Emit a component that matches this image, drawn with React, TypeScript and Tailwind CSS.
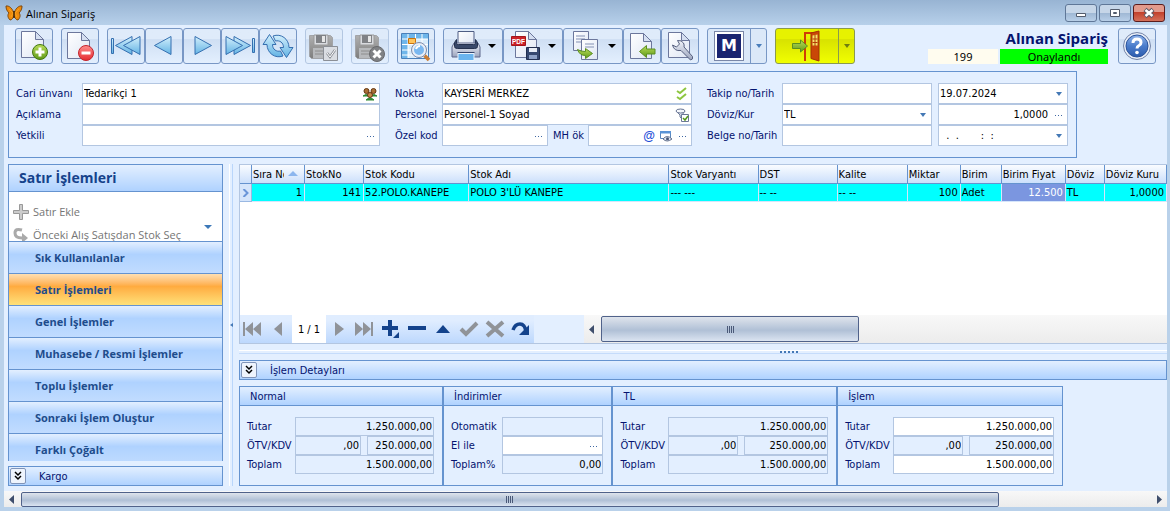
import React from 'react';

const SIDE_ITEMS = [
  'Sık Kullanılanlar',
  'Satır İşlemleri',
  'Genel İşlemler',
  'Muhasebe / Resmi İşlemler',
  'Toplu İşlemler',
  'Sonraki İşlem Oluştur',
  'Farklı Çoğalt',
];

const COLUMNS = [
  { title: 'Sıra No', value: '1', width: 'w-[53px]', right: true, sorted: true },
  { title: 'StokNo', value: '141', width: 'w-[59px]', right: true },
  { title: 'Stok Kodu', value: '52.POLO.KANEPE', width: 'w-[105px]' },
  { title: 'Stok Adı', value: "POLO 3'LÜ KANEPE", width: 'w-[200px]' },
  { title: 'Stok Varyantı', value: '--- ---', width: 'w-[89px]' },
  { title: 'DST', value: '-- --', width: 'w-[79px]' },
  { title: 'Kalite', value: '-- --', width: 'w-[70px]' },
  { title: 'Miktar', value: '100', width: 'w-[53px]', right: true },
  { title: 'Birim', value: 'Adet', width: 'w-[41px]' },
  { title: 'Birim Fiyat', value: '12.500', width: 'w-[64px]', right: true, focused: true },
  { title: 'Döviz', value: 'TL', width: 'w-[39px]' },
  { title: 'Döviz Kuru', value: '1,0000', width: 'w-[62px]', right: true },
];

type IconProps = { children: React.ReactNode; size?: number };

const Icon: React.FC<IconProps> = ({ children, size = 32 }) => (
  <svg width={size} height={size} viewBox={`0 0 ${size} ${size}`} fill="none" className="shrink-0" aria-hidden="true">
    {children}
  </svg>
);

const Defs = () => (
  <svg width="0" height="0" className="absolute" aria-hidden="true">
    <defs>
      <linearGradient id="page" x1="0" y1="0" x2="1" y2="1">
        <stop offset="0" stopColor="#ffffff" />
        <stop offset="1" stopColor="#dfe6f4" />
      </linearGradient>
      <linearGradient id="arrow" x1="0" y1="0" x2="0" y2="1">
        <stop offset="0" stopColor="#d3effc" />
        <stop offset="1" stopColor="#62b3e4" />
      </linearGradient>
      <linearGradient id="green" x1="0" y1="0" x2="0" y2="1">
        <stop offset="0" stopColor="#b9dc5a" />
        <stop offset="1" stopColor="#5f9a18" />
      </linearGradient>
      <linearGradient id="red" x1="0" y1="0" x2="0" y2="1">
        <stop offset="0" stopColor="#ff8d8d" />
        <stop offset="1" stopColor="#e52a2f" />
      </linearGradient>
      <linearGradient id="steel" x1="0" y1="0" x2="0" y2="1">
        <stop offset="0" stopColor="#f2f4fa" />
        <stop offset="1" stopColor="#9aa3bd" />
      </linearGradient>
      <linearGradient id="grey" x1="0" y1="0" x2="0" y2="1">
        <stop offset="0" stopColor="#b0b0b0" />
        <stop offset="1" stopColor="#7d7d7d" />
      </linearGradient>
      <linearGradient id="help" x1="0" y1="0" x2="0" y2="1">
        <stop offset="0" stopColor="#8fb3ea" />
        <stop offset="0.5" stopColor="#4a7ccb" />
        <stop offset="1" stopColor="#2d5cae" />
      </linearGradient>
    </defs>
  </svg>
);

const Sheet: React.FC<{ x?: number; y?: number; w?: number; h?: number }> = ({ x = 4, y = 2, w = 22, h = 26 }) => (
  <>
    <path d={`M${x} ${y}h${w - 8}l8 8v${h - 8}h${-w}z`} fill="url(#page)" stroke="#6c779c" />
    <path d={`M${x + w - 8} ${y}v8h8z`} fill="#d5dff1" stroke="#6c779c" />
  </>
);

const GreenArrow: React.FC<{ d: string }> = ({ d }) => (
  <path d={d} fill="url(#green)" stroke="#5c8f21" strokeLinejoin="round" />
);

const Disk = () => (
  <>
    <path d="M1.500 5.500h21l2 2v21H3.500l-2-2z" fill="url(#grey)" stroke="#a2a4a8" />
    <path d="M6 5h14v10H6z" fill="#d9dbdf" stroke="#999" />
    <path d="M8 5h10v8H8z" fill="#808286" />
    <path d="M14 6h3v6h-3z" fill="#e7e7e7" />
    <path d="M5 18h16v10H5z" fill="#b7b9bc" />
    <path d="M7 21h10M7 24h8" stroke="#8e8e8e" />
  </>
);

const Butterfly = () => (
  <Icon size={18}>
    <path d="M8.500 8C7 4 4 1.500 1 2c0 3 1 5 3 7-2 2-1 5 1 7 2 0 3-2 4-4 1 2 2 4 4 4 2-2 3-5 1-7 2-2 3-4 3-7-3-.5-6 2-7.500 6z" fill="#ee8a0b" stroke="#7d470b" />
    <path d="M4 5l4 4-2 4M14 5l-4 4 2 4" stroke="#f7a11f" />
    <path d="M9 7v7" stroke="#3a240d" strokeWidth="1.500" />
  </Icon>
);

type ToolProps = { label: string; disabled?: boolean; joined?: boolean; children: React.ReactNode };

const ToolButton: React.FC<ToolProps> = ({ label, disabled, joined, children }) => (
  <button
    type="button"
    aria-label={label}
    disabled={disabled}
    className={`flex h-9 w-[38px] shrink-0 items-center justify-center rounded-[3px] border bg-linear-to-b from-[#dfebfa] from-30% via-[#cfdff3] via-31% to-[#e3effe] ${
      disabled ? 'border-[#b3c7e2]' : 'border-[#7897c5]'
    } ${joined ? '' : 'ml-2'}`}
  >
    {children}
  </button>
);

const ToolMenuButton: React.FC<ToolProps> = ({ label, joined, children }) => (
  <button
    type="button"
    aria-label={label}
    className={`flex h-9 w-[60px] shrink-0 items-center gap-1.5 rounded-[3px] border border-[#7897c5] bg-linear-to-b from-[#dfebfa] from-30% via-[#cfdff3] via-31% to-[#e3effe] pl-1.5 ${
      joined ? '' : 'ml-2'
    }`}
  >
    {children}
    <Icon size={8}>
      <path d="M0 2h8L4 6z" fill="#000" />
    </Icon>
  </button>
);

const Toolbar = () => (
  <div className="flex h-[46px] shrink-0 items-start pl-[3px] pr-[11px] pt-[3px]">
    <ToolButton label="Yeni">
      <Icon>
        <Sheet x={3.5} y={1.5} />
        <circle cx="22" cy="22" r="7.500" fill="url(#green)" stroke="#44790f" />
        <path d="M22 17.500v9M17.500 22h9" stroke="#fff" strokeWidth="3" />
      </Icon>
    </ToolButton>
    <ToolButton label="Sil">
      <Icon>
        <Sheet x={3.5} y={2.5} />
        <circle cx="22" cy="23" r="7.500" fill="url(#red)" stroke="#c4242c" />
        <path d="M17.500 23h9" stroke="#fff" strokeWidth="3" />
      </Icon>
    </ToolButton>
    <ToolButton label="İlk kayıt">
      <Icon>
        <g fill="url(#arrow)" stroke="#356fb0" strokeLinejoin="round">
          <path d="M1.500 8.500h2v15h-2z" />
          <path d="M22 6.500v18L5.500 15.500z" />
          <path d="M30 6.500v18L13.500 15.500z" />
        </g>
      </Icon>
    </ToolButton>
    <ToolButton label="Önceki kayıt" joined>
      <Icon>
        <path d="M23 6.500v18L6.500 15.500z" fill="url(#arrow)" stroke="#356fb0" strokeLinejoin="round" />
      </Icon>
    </ToolButton>
    <ToolButton label="Sonraki kayıt" joined>
      <Icon>
        <path d="M9 6.500v18l16.500-9z" fill="url(#arrow)" stroke="#356fb0" strokeLinejoin="round" />
      </Icon>
    </ToolButton>
    <ToolButton label="Son kayıt" joined>
      <Icon>
        <g fill="url(#arrow)" stroke="#356fb0" strokeLinejoin="round">
          <path d="M28.500 8.500h2v14h-2z" />
          <path d="M10 6.500v18l16.500-9z" />
          <path d="M2 6.500v18l16.500-9z" />
        </g>
      </Icon>
    </ToolButton>
    <ToolButton label="Yenile" joined>
      <Icon>
        <g fill="url(#arrow)" stroke="#356fb0" strokeLinejoin="round">
          <path d="M7.500 4.500l6.500 10h-3.500c0 5 4 7.500 8 6.500l2.500 5C13 29 5 23 5 14.500H1z" />
          <path d="M24.500 27.500l-6.500-10h3.500c0-5-4-7.500-8-6.500L11 6c8-3 16 3 16 11.500h4z" />
        </g>
      </Icon>
    </ToolButton>
    <ToolButton label="Kaydet" disabled>
      <Icon>
        <Disk />
        <path d="M15.500 16.500h14v14h-14z" fill="#dadde2" stroke="#8b8f96" />
        <path d="M19 23l3 4 5-7" stroke="#8b8f96" strokeWidth="2.500" />
        <path d="M19 23l3 4 5-7" stroke="#fff" />
      </Icon>
    </ToolButton>
    <ToolButton label="Vazgeç" disabled>
      <Icon>
        <Disk />
        <circle cx="23" cy="24" r="7.500" fill="#808285" stroke="#68696c" />
        <path d="M19.500 20.500l7 7M26.500 20.500l-7 7" stroke="#fff" strokeWidth="3" />
      </Icon>
    </ToolButton>
    <ToolButton label="Listele">
      <Icon>
        <path d="M1.500 3.500h27v25h-27z" fill="#d9ecfb" stroke="#4a7fb9" />
        <path d="M2 4h6v24H2zM2 4h26v5H2z" fill="#6fb6ea" />
        <path d="M2 9h26M2 14.500h26M2 20h26M2 25h26M8 4v24M15.500 4v24M22 4v24" stroke="#fff" />
        <path d="M8.500 8.500h7v5h-7z" fill="#ffc45b" stroke="#c8720d" />
        <path d="M24 25l5 5" stroke="#c97d35" strokeWidth="3.500" />
        <circle cx="19" cy="20" r="6.500" fill="#7ab8f0" stroke="#e8eef7" strokeWidth="3" />
        <circle cx="19" cy="20" r="7.500" stroke="#7d8cab" />
        <path d="M16 19q1-3 4-3" stroke="#fff" strokeWidth="2" />
      </Icon>
    </ToolButton>
    <ToolMenuButton label="Yazdır">
      <Icon>
        <path d="M8 1.500h16v14H8z" fill="url(#page)" stroke="#4e5d84" />
        <path d="M4 13h24l2 4v10H2V17z" fill="url(#steel)" stroke="#5c678a" />
        <path d="M6.500 9.500v4q0 1 2 1h15q2 0 2-1v-4l2 3v4q0 2-3 2h-17q-3 0-3-2v-4z" fill="#394869" stroke="#26324f" />
        <path d="M8 23.500h16v7H8z" fill="#6ab4ee" stroke="#eaf4fd" />
        <path d="M7.500 22.500h17" stroke="#35456c" />
      </Icon>
    </ToolMenuButton>
    <ToolMenuButton label="PDF olarak kaydet" joined>
      <Icon>
        <Sheet x={5.5} y={1.5} w={21} h={26} />
        <path d="M1.500 6.500h14v9h-14z" fill="#cc2229" stroke="#a3161c" />
        <text x="2" y="13.500" fontSize="6.500" fontWeight="bold" fontFamily="Liberation Sans, sans-serif" fill="#fff">PDF</text>
        <path d="M16.500 17.500h13v12h-13z" fill="#36486f" stroke="#222f50" />
        <path d="M19 18h8v4h-8z" fill="#e8edf6" />
        <path d="M19 25h8v4h-8z" fill="#8fa2c7" />
      </Icon>
    </ToolMenuButton>
    <ToolMenuButton label="Kopyala" joined>
      <Icon>
        <path d="M3.500 1.500h15v19h-15z" fill="url(#page)" stroke="#6c779c" />
        <path d="M6 6h9M6 9h9M6 12h7" stroke="#8391b4" />
        <path d="M11.500 9.500h16v20h-16z" fill="url(#page)" stroke="#6c779c" />
        <path d="M15 14h9M15 17h9" stroke="#8391b4" />
        <GreenArrow d="M7.500 19.500q3 2 8 2v-3l7 5-7 5v-3q-6 0-8-6z" />
      </Icon>
    </ToolMenuButton>
    <ToolButton label="İçeri al" joined>
      <Icon>
        <Sheet x={4.5} y={3.5} w={21} h={25} />
        <GreenArrow d="M13.500 21.500l7-6v3.500h8.500v5h-8.500v3.500z" />
      </Icon>
    </ToolButton>
    <ToolButton label="Ayarlar" joined>
      <Icon>
        <Sheet x={4.5} y={2.5} w={21} h={25} />
        <path d="M8.500 15l4 2 3-3-2-3.500q4-.5 6 2.500 1 2 .5 4l8.500 9.500q1 3-2 3.500L17 20.500q-7 1-8.500-5.500z" fill="url(#steel)" stroke="#56607f" strokeLinejoin="round" />
      </Icon>
    </ToolButton>
    <div className="ml-2 flex h-9 w-[60px] shrink-0 overflow-hidden rounded-[3px] border border-[#7897c5] bg-[#dbe8f8]">
      <button type="button" aria-label="M modülü" className="flex w-[42px] items-center justify-center">
        <span className="flex h-[30px] w-[30px] items-center justify-center border border-[#7a87a8] bg-white p-0.5">
          <span className="flex h-full w-full items-center justify-center bg-[#1a2470] font-['DejaVu_Sans'] text-base font-bold text-white">M</span>
        </span>
      </button>
      <button type="button" aria-label="M menüsü" className="flex flex-1 items-center justify-center border-l border-[#7897c5]">
        <Icon size={6}>
          <path d="M0 1h6L3 5z" fill="#4a7ebb" />
        </Icon>
      </button>
    </div>
    <div className="ml-2 flex h-9 w-20 shrink-0 overflow-hidden rounded-[3px] border border-[#8a9a4d] bg-linear-to-b from-[#e7f200] from-30% via-[#d8e200] via-31% to-[#f1ff00]">
      <button type="button" aria-label="Çıkış" className="flex w-[62px] items-center justify-center">
        <Icon>
          <path d="M14 31V3h12" stroke="#cf3d05" strokeWidth="2" />
          <path d="M20 3l8-2v30l-8-2.500z" fill="#c94707" stroke="#a33206" />
          <path d="M21.500 5.500l5-1v11h-5z" fill="#f4e36b" />
          <path d="M24 5v11M21.500 9h5M21.500 12.500h5" stroke="#b33c07" />
          <GreenArrow d="M1.500 13.500h8V10l7 6-7 6v-3.500h-8z" />
        </Icon>
      </button>
      <button type="button" aria-label="Çıkış menüsü" className="flex flex-1 items-center justify-center border-l border-[#8a9a4d]">
        <Icon size={6}>
          <path d="M0 1h6L3 5z" fill="#6f7d10" />
        </Icon>
      </button>
    </div>
    <div className="ml-auto mr-2.5 w-[180px]">
      <h1 className="h-[21px] text-right font-['Open_Sans'] text-[15px] font-bold leading-[21px] text-[#04136f]">Alınan Sipariş</h1>
      <div className="flex gap-0.5 text-center font-['Noto_Sans'] leading-[15px] text-black">
        <span className="h-[15px] w-[70px] bg-[#fffcef]">199</span>
        <span className="h-[15px] flex-1 bg-[#00ff00]">Onaylandı</span>
      </div>
    </div>
    <ToolButton label="Yardım" joined>
      <Icon>
        <circle cx="16" cy="16" r="13.500" fill="#e9eef7" stroke="#7384a8" />
        <circle cx="16" cy="16" r="11" fill="url(#help)" stroke="#2c549c" />
        <path d="M12 13q0-4 4-4t4 3.500q0 2-2 3t-2 3" stroke="#fff" strokeWidth="3" />
        <circle cx="16" cy="22.500" r="1.800" fill="#fff" />
      </Icon>
    </ToolButton>
  </div>
);

const Dots = () => (
  <Icon size={12}>
    <path d="M2 6.500h1M5 6.500h1M8 6.500h1" stroke="#3f68a3" />
  </Icon>
);

const Chevron = () => (
  <Icon size={12}>
    <path d="M3 4h6L6 8z" fill="#4478b5" />
  </Icon>
);

type FieldProps = {
  id: string;
  label: string;
  value?: string;
  hideLabel?: boolean;
  right?: boolean;
  readOnly?: boolean;
  tail?: React.ReactNode;
  labelWidth?: string;
};

const Field: React.FC<FieldProps> = ({ id, label, value = '', hideLabel, right, readOnly, tail, labelWidth = 'w-[66px]' }) => (
  <div className="flex min-w-0 flex-1">
    {!hideLabel && (
      <label htmlFor={id} className={`flex shrink-0 items-center whitespace-nowrap ${labelWidth}`}>
        {label}
      </label>
    )}
    <div className={`flex min-w-0 flex-1 items-center border border-[#b3c6e1] ${readOnly ? '' : 'bg-white'}`}>
      <input
        id={id}
        aria-label={hideLabel ? label : undefined}
        defaultValue={value}
        readOnly={readOnly}
        className={`h-full min-w-0 flex-1 bg-transparent px-px text-black outline-none ${right ? 'text-right' : ''}`}
      />
      {tail && (
        <button type="button" aria-label={`${label} seç`} className="flex shrink-0 items-center gap-1 pr-0.5">
          {tail}
        </button>
      )}
    </div>
  </div>
);

const OrderForm = () => (
  <form className="ml-1 flex h-[87px] w-full max-w-[1069px] shrink-0 items-center gap-[15px] border border-[#6593cf] pl-[7px] pr-2">
    <div className="grid min-w-0 flex-[364] grid-cols-1 grid-rows-[21px_21px_21px]">
      <Field
        id="cari"
        label="Cari ünvanı"
        value="Tedarikçi 1"
        tail={
          <Icon size={14}>
            <path d="M0 9q3-3 6 0zM8 9q3-3 6 0zM3 13q4-4 8 0z" fill="#2f8a35" stroke="#2f8a35" />
            <circle cx="3.500" cy="4" r="2.500" fill="#a86f35" stroke="#643610" />
            <circle cx="10.500" cy="4" r="2.500" fill="#a86f35" stroke="#643610" />
            <circle cx="7" cy="8" r="2.500" fill="#c58a4b" stroke="#643610" />
          </Icon>
        }
      />
      <Field id="aciklama" label="Açıklama" />
      <Field id="yetkili" label="Yetkili" tail={<Dots />} />
    </div>
    <div className="grid min-w-0 flex-[297] grid-cols-1 grid-rows-[21px_21px_21px]">
      <Field
        id="nokta"
        label="Nokta"
        value="KAYSERİ MERKEZ"
        labelWidth="w-[47px]"
        tail={
          <Icon size={14}>
            <path d="M2 4l3 2 6-5M2 10l3 2 6-5" stroke="#8dc63f" strokeWidth="2" />
          </Icon>
        }
      />
      <Field
        id="personel"
        label="Personel"
        value="Personel-1 Soyad"
        labelWidth="w-[47px]"
        tail={
          <Icon size={14}>
            <path d="M1 3q5-3 9 0L7 7v4L5 9V7z" fill="#dce2ee" stroke="#6b7896" />
            <ellipse cx="5.500" cy="3" rx="4.500" ry="2" fill="#f5f7fb" stroke="#6b7896" />
            <path d="M6.500 6.500h7v7h-7z" fill="#fff" stroke="#6b7896" />
            <path d="M8 10l2 2 3-4" stroke="#55991c" strokeWidth="1.500" />
          </Icon>
        }
      />
      <div className="flex gap-[5px]">
        <div className="flex min-w-0 flex-[153]">
          <Field id="ozelkod" label="Özel kod" labelWidth="w-[47px]" tail={<Dots />} />
        </div>
        <div className="flex min-w-0 flex-[139]">
          <Field
            id="mhok"
            label="MH ök"
            labelWidth="w-[35px]"
            tail={
              <>
                <span className="font-['Liberation_Sans'] text-xs font-bold leading-[14px] text-[#1f4fd8]">@</span>
                <Icon size={14}>
                  <path d="M1.500 2.500h10v7h-10z" fill="#fff" stroke="#5a87bd" />
                  <path d="M1 2h11v2.500H1z" fill="#5a94d6" />
                  <path d="M4 10q4-5 9 0-5 4-9 0z" fill="#dfe6f0" stroke="#63718e" />
                  <circle cx="8.500" cy="9.800" r="1.500" fill="#465675" />
                </Icon>
                <Dots />
              </>
            }
          />
        </div>
      </div>
    </div>
    <div className="grid min-w-0 flex-[361] grid-cols-1 grid-rows-[21px_21px_21px]">
      <div className="flex gap-1.5">
        <div className="flex min-w-0 flex-[225]">
          <Field id="takip" label="Takip no/Tarih" labelWidth="w-[75px]" />
        </div>
        <div className="flex min-w-0 flex-[130]">
          <Field id="tarih" label="Tarih" hideLabel value="19.07.2024" tail={<Chevron />} />
        </div>
      </div>
      <div className="flex gap-1.5">
        <div className="flex min-w-0 flex-[225]">
          <label htmlFor="doviz" className="flex w-[75px] shrink-0 items-center">Döviz/Kur</label>
          <div className="flex min-w-0 flex-1 items-center border border-[#b3c6e1] bg-white pr-0.5">
            <select id="doviz" className="h-full min-w-0 flex-1 appearance-none bg-transparent px-px text-black outline-none">
              <option>TL</option>
            </select>
            <Chevron />
          </div>
        </div>
        <div className="flex min-w-0 flex-[130]">
          <Field id="kur" label="Kur" hideLabel right value="1,0000" tail={<span className="pl-1"><Dots /></span>} />
        </div>
      </div>
      <div className="flex gap-1.5">
        <div className="flex min-w-0 flex-[225]">
          <Field id="belge" label="Belge no/Tarih" labelWidth="w-[75px]" />
        </div>
        <div className="flex min-w-0 flex-[130]">
          <Field id="belgetarih" label="Belge tarihi" hideLabel value={'\u00a0 . \u00a0.\u00a0 \u00a0 \u00a0 \u00a0: \u00a0:'} tail={<Chevron />} />
        </div>
      </div>
    </div>
  </form>
);

const ExpandBar: React.FC<{ title: string }> = ({ title }) => (
  <div className="flex h-5 shrink-0 items-center border border-[#6593cf] bg-linear-to-b from-[#e3efff] to-[#afd2ff] pl-px">
    <button type="button" aria-label={`${title} aç`} className="flex h-4 w-4 items-center justify-center rounded-[2px] border border-[#8094b8] bg-[#eef4fd]">
      <Icon size={10}>
        <path d="M2 1l3 3 3-3M2 5l3 3 3-3" stroke="#000" strokeWidth="1.500" />
      </Icon>
    </button>
    <span className="ml-[13px]">{title}</span>
  </div>
);

const Sidebar = () => (
  <aside className="flex w-[215px] shrink-0 flex-col gap-[5px]">
    <div className="flex min-h-0 flex-1 flex-col overflow-hidden border border-b-0 border-[#6593cf]">
      <h2 className="flex h-[27px] shrink-0 items-center border-b border-[#6593cf] bg-linear-to-b from-[#e3efff] to-[#afd2ff] pl-2.5 font-['Open_Sans'] text-sm font-bold text-[#15428b]">
        Satır İşlemleri
      </h2>
      <div className="flex h-[49px] shrink-0 overflow-hidden bg-white pl-1 pr-2.5 font-['Open_Sans'] text-[#757575]">
        <div className="flex-1 pt-2">
          <button type="button" disabled className="flex h-[23px] items-center gap-1">
            <Icon size={16}>
              <path d="M6.500 .5h3v6h6v3h-6v6h-3v-6h-6v-3h6z" fill="#ccc" stroke="#999" />
            </Icon>
            Satır Ekle
          </button>
          <button type="button" disabled className="flex h-[23px] items-center gap-1 whitespace-nowrap">
            <Icon size={16}>
              <path d="M9 3Q2 1 2 6t7 5h1" stroke="#aaa" strokeWidth="3" />
              <path d="M9 6l6 5-6 5z" fill="#aaa" />
            </Icon>
            Önceki Alış Satışdan Stok Seç
          </button>
        </div>
        <button type="button" aria-label="Diğer işlemler" className="flex items-center pb-1 pt-6">
          <Icon size={8}>
            <path d="M0 2h8L4 6z" fill="#3c78b8" />
          </Icon>
        </button>
      </div>
      <nav>
        {SIDE_ITEMS.map((item) => (
          <button
            key={item}
            type="button"
            className={`flex h-8 w-full items-center border-t border-[#6593cf] bg-linear-to-b pl-[26px] font-['Open_Sans'] font-bold text-[#1e4c8c] ${
              item === 'Satır İşlemleri'
                ? 'from-[#ffdfb1] from-0% via-[#ffab3f] via-40% to-[#fee178]'
                : 'from-[#e3efff] from-0% via-[#afd2ff] via-40% to-[#c1dcff]'
            }`}
          >
            {item}
          </button>
        ))}
      </nav>
    </div>
    <ExpandBar title="Kargo" />
  </aside>
);

const NavButton: React.FC<{ label: string; children: React.ReactNode }> = ({ label, children }) => (
  <button type="button" aria-label={label} className="flex w-[26px] items-center justify-center">
    <Icon size={20}>{children}</Icon>
  </button>
);

const Grip = () => (
  <span className="flex gap-px" aria-hidden="true">
    <span className="h-[7px] w-px bg-[#4a5978]" />
    <span className="h-[7px] w-px bg-[#4a5978]" />
    <span className="h-[7px] w-px bg-[#4a5978]" />
    <span className="h-[7px] w-px bg-[#4a5978]" />
  </span>
);

const THUMB =
  'flex items-center justify-center rounded-[2px] border border-[#50628a] bg-linear-to-b from-[#dfe4ec] from-0% via-[#b0c0d6] via-55% to-[#dbe4f1]';

const LineNavigator = () => (
  <div className="flex h-7 shrink-0">
    <div className="flex w-[294px] shrink-0 bg-linear-to-b from-[#e0edff] from-20% to-[#bdd8fd]">
      <NavButton label="İlk">
        <path d="M0 3h2v14H0zM10 3v14l-8-7zM18 3v14l-8-7z" fill="#909398" />
      </NavButton>
      <NavButton label="Geri">
        <path d="M13 3v14l-8-7z" fill="#909398" />
      </NavButton>
      <span className="flex w-[34px] items-center justify-center bg-white text-black">1 / 1</span>
      <NavButton label="İleri">
        <path d="M6 3v14l9-7z" fill="#909398" />
      </NavButton>
      <NavButton label="Son">
        <path d="M16 3h2v14h-2zM0 3v14l8-7zM8 3v14l8-7z" fill="#909398" />
      </NavButton>
      <NavButton label="Ekle">
        <path d="M7 1h4v6h6v4h-6v6H7v-6H1V7h6z" fill="#14438c" />
        <path d="M18 13v6h-6z" fill="#14438c" />
      </NavButton>
      <NavButton label="Sil">
        <path d="M1 7h18v4H1z" fill="#14438c" />
      </NavButton>
      <NavButton label="Düzenle">
        <path d="M3 14l7-8 7 8z" fill="#14438c" />
      </NavButton>
      <NavButton label="Onayla">
        <path d="M2 10l5 5L18 4" stroke="#909398" strokeWidth="4" />
      </NavButton>
      <NavButton label="İptal">
        <path d="M2 3l16 14M18 3L2 17" stroke="#909398" strokeWidth="4" />
      </NavButton>
      <NavButton label="Yenile">
        <path d="M2 11Q4 5 9 5t6 8" stroke="#14438c" strokeWidth="3.500" />
        <path d="M18 6v10H8z" fill="#14438c" />
      </NavButton>
    </div>
    <div className="w-[50px] shrink-0 bg-[#e3efff]" />
    <div className="flex min-w-0 flex-1 items-center bg-linear-to-b from-[#f8f8f8] to-[#ececec]">
      <button type="button" aria-label="Sola kaydır" className="flex w-[17px] shrink-0 justify-center">
        <Icon size={9}>
          <path d="M6 0v9L1 4.500z" fill="#3f4e6c" />
        </Icon>
      </button>
      <div className={`h-[26px] w-[45%] max-w-[258px] ${THUMB}`}>
        <Grip />
      </div>
    </div>
  </div>
);

const LinesGrid = () => (
  <div className="flex min-h-0 flex-1 flex-col overflow-hidden border-y border-l border-[#b3c6e1] bg-white">
    <div className="min-h-0 flex-1 overflow-hidden">
      <table className="w-full table-fixed border-separate border-spacing-0 whitespace-nowrap text-black">
        <thead>
          <tr className="h-[19px] bg-linear-to-b from-[#fafcff] to-[#c9defb]">
            <th scope="col" className="w-3 border-b border-r border-[#6593cf] p-0" aria-label="Seçili" />
            {COLUMNS.map((col) => (
              <th key={col.title} scope="col" className={`border-b border-r border-[#6593cf] p-0 pl-px text-left font-normal ${col.width}`}>
                <div className="flex items-center overflow-hidden">
                  <span className={col.sorted ? 'w-[31px] overflow-hidden' : ''}>{col.title}</span>
                  {col.sorted && (
                    <span className="ml-1">
                      <Icon size={10}>
                        <path d="M0 7h10L5 2z" fill="#8cb6ee" />
                      </Icon>
                    </span>
                  )}
                </div>
              </th>
            ))}
          </tr>
        </thead>
        <tbody>
          <tr className="h-[18px] bg-[#00ffff]">
            <td className="border-b border-r border-[#9ab8e2] bg-[#d5e5fb] p-0 pl-0.5">
              <Icon size={8}>
                <path d="M1.500 0l4 4-4 4" stroke="#6a95d8" strokeWidth="2" />
              </Icon>
            </td>
            {COLUMNS.map((col) => (
              <td
                key={col.title}
                className={`border-b border-r border-[#d5e5fb] py-0 pl-px pr-0.5 ${col.right ? 'text-right' : ''} ${
                  col.focused ? 'bg-[#7b96e0] text-white' : ''
                }`}
              >
                {col.value}
              </td>
            ))}
          </tr>
        </tbody>
      </table>
    </div>
    <LineNavigator />
  </div>
);

const Panel: React.FC<{ title: string; width: string; children: React.ReactNode }> = ({ title, width, children }) => (
  <section aria-label={title} className={`min-w-0 border border-[#6593cf] ${width}`}>
    <h3 className="flex h-[19px] items-center border-b border-[#6593cf] bg-linear-to-b from-[#e3efff] to-[#afd2ff] pl-2.5">{title}</h3>
    <div className="grid grid-cols-1 grid-rows-[19px_19px_19px] pl-[7px] pr-2 pt-[11px]">{children}</div>
  </section>
);

type TotalsProps = { id: string; title: string; width: string; mid: string; editable?: boolean };

const Totals: React.FC<TotalsProps> = ({ id, title, width, mid, editable }) => (
  <Panel title={title} width={width}>
    <Field id={`${id}-tutar`} label="Tutar" labelWidth="w-12" right readOnly={!editable} value="1.250.000,00" />
    <div className="flex gap-1.5">
      <div className={`flex min-w-0 ${mid}`}>
        <Field id={`${id}-otv`} label="ÖTV/KDV" labelWidth="w-12" right readOnly value=",00" />
      </div>
      <div className="flex min-w-0 flex-1">
        <Field id={`${id}-kdv`} label="KDV" hideLabel right readOnly value="250.000,00" />
      </div>
    </div>
    <Field id={`${id}-toplam`} label="Toplam" labelWidth="w-12" right readOnly={!editable} value="1.500.000,00" />
  </Panel>
);

const Details = () => (
  <div className="flex h-[100px] w-full max-w-[824px] shrink-0">
    <Totals id="normal" title="Normal" width="flex-[204]" mid="w-[114px]" />
    <Panel title="İndirimler" width="flex-[169]">
      <Field id="otomatik" label="Otomatik" labelWidth="w-[51px]" readOnly />
      <Field id="elile" label="El ile" labelWidth="w-[51px]" tail={<Dots />} />
      <Field id="yuzde" label="Toplam%" labelWidth="w-[51px]" right readOnly value="0,00" />
    </Panel>
    <Totals id="tl" title="TL" width="flex-[225]" mid="w-[118px]" />
    <Totals id="islem" title="İşlem" width="flex-[226]" mid="w-[118px]" editable />
  </div>
);

const WindowButtons = () => (
  <div className="flex gap-0.5">
    <button type="button" aria-label="Küçült" className="flex h-[18px] w-8 items-center justify-center rounded-[3px] border border-[#5f7797] bg-linear-to-b from-[#c6d6e8] from-50% via-[#9fb8d4] via-51% to-[#b8cfe8]">
      <Icon size={12}>
        <path d="M1.500 6.500h9v3h-9z" fill="#fff" stroke="#535c6c" />
      </Icon>
    </button>
    <button type="button" aria-label="Büyüt" className="flex h-[18px] w-8 items-center justify-center rounded-[3px] border border-[#5f7797] bg-linear-to-b from-[#c6d6e8] from-50% via-[#9fb8d4] via-51% to-[#b8cfe8]">
      <Icon size={12}>
        <path d="M1.500 2.500h9v7h-9z" fill="#fff" stroke="#535c6c" />
        <path d="M4.500 5.500h3v1h-3z" stroke="#535c6c" />
      </Icon>
    </button>
    <button type="button" aria-label="Kapat" className="flex h-[18px] w-8 items-center justify-center rounded-[3px] border border-[#5b1c1c] bg-linear-to-b from-[#e29a8c] from-45% via-[#c2402b] via-46% to-[#d4705a]">
      <Icon size={12}>
        <path d="M2 2.500l8 7M10 2.500l-8 7" stroke="#5f5a66" strokeWidth="4.500" />
        <path d="M2.500 3l7 6M9.500 3l-7 6" stroke="#fff" strokeWidth="2.500" />
      </Icon>
    </button>
  </div>
);

const App: React.FC = () => (
  <div className="flex h-screen flex-col overflow-hidden bg-[#b9d1ea] font-['DejaVu_Sans_Condensed','Noto_Sans',sans-serif] text-[11px] leading-[15px] text-[#04136f]">
    <Defs />
    <header className="flex h-[25px] shrink-0 items-center bg-linear-to-b from-[#98b4d3] to-[#b7d0ea] pl-[5px] pr-[5px] text-black">
      <Butterfly />
      <span className="ml-[3px] flex-1 pt-0.5 font-['Open_Sans']">Alınan Sipariş</span>
      <WindowButtons />
    </header>
    <main className="mb-1 ml-1 mr-[3px] flex min-h-0 flex-1 flex-col bg-[#e3efff]">
      <Toolbar />
      <OrderForm />
      <div className="flex min-h-0 flex-1 pb-[5px] pl-1 pt-1.5">
        <Sidebar />
        <div className="mx-1.5 flex w-1 shrink-0 items-center border-l border-r border-l-white border-r-[#b9d6fb]">
          <Icon size={4}>
            <path d="M3 0v4L0 2z" fill="#4478b5" />
          </Icon>
        </div>
        <section className="flex min-w-0 flex-1 flex-col">
          <LinesGrid />
          <div className="my-1.5 flex h-1 shrink-0 items-center justify-center gap-0.5 border-b border-t border-b-[#c5dcfb] border-t-white pl-[172px]">
            {[0, 1, 2, 3, 4].map((dot) => (
              <span key={dot} className="size-0.5 bg-[#4478b5]" />
            ))}
          </div>
          <ExpandBar title="İşlem Detayları" />
          <div className="h-1.5 shrink-0" />
          <Details />
        </section>
      </div>
      <div className="flex h-4 shrink-0 items-center bg-linear-to-b from-[#f8f8f8] to-[#ececec]">
        <button type="button" aria-label="Sayfayı sola kaydır" className="flex w-[17px] shrink-0 justify-center">
          <Icon size={9}>
            <path d="M6 0v9L1 4.500z" fill="#3f4e6c" />
          </Icon>
        </button>
        <div className="min-w-0 flex-1">
          <div className={`h-[15px] w-[86.600%] ${THUMB}`}>
            <Grip />
          </div>
        </div>
        <button type="button" aria-label="Sayfayı sağa kaydır" className="flex w-[17px] shrink-0 justify-center">
          <Icon size={9}>
            <path d="M3 0v9l5-4.500z" fill="#3f4e6c" />
          </Icon>
        </button>
      </div>
    </main>
  </div>
);

export default App;
